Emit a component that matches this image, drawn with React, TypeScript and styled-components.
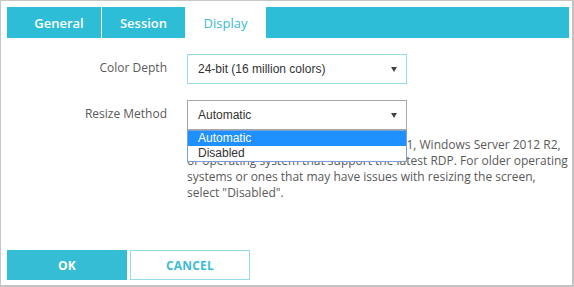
import React from "react";
import styled, { createGlobalStyle } from "styled-components";

const Global = createGlobalStyle`
  html, body { margin: 0; padding: 0; background: #fff; }
  * { box-sizing: border-box; }
`;

const CYAN = "#2dbdd7";

const Frame = styled.div`
  width: 574px;
  height: 287px;
  border-top: 1px solid #c6c6c6;
  border-left: 1px solid #c6c6c6;
  border-right: 2px solid #c2c2c2;
  border-bottom: 2px solid #c2c2c2;
  padding: 6px 3px 5px 6px;
  display: flex;
  flex-direction: column;
  font-family: "Open Sans", "Liberation Sans", sans-serif;
  background: #fff;
`;

const TabBar = styled.div`
  height: 31px;
  background: ${CYAN};
  display: flex;
  flex-shrink: 0;
`;

const Tab = styled.div<{ $w: number; $active?: boolean; $pl?: number; $sep?: boolean }>`
  width: ${(p) => p.$w}px;
  padding-left: ${(p) => p.$pl ?? 0}px;
  display: flex;
  align-items: center;
  justify-content: center;
  font-size: 13px;
  font-weight: ${(p) => (p.$active ? 400 : 600)};
  color: ${(p) => (p.$active ? "#3ab9d3" : "#fff")};
  background: ${(p) => (p.$active ? "#fff" : "transparent")};
  border-left: ${(p) => (p.$sep ? "1px solid #fff" : "none")};
`;

const Body = styled.div`
  flex: 1;
  padding-top: 16px;
`;

const Form = styled.div`
  display: grid;
  grid-template-columns: 160px 220px;
  column-gap: 20px;
  row-gap: 16px;
  align-items: center;
`;

const Label = styled.div`
  text-align: right;
  font-size: 12px;
  color: #5a5a5a;
  line-height: 16px;
  margin-top: -3px;
`;

const SelectBox = styled.div<{ $focused?: boolean }>`
  position: relative;
  height: 30px;
  border: 1px solid ${(p) => (p.$focused ? "#a8a8a8" : "#93dce9")};
  padding: 0 10px;
  display: flex;
  align-items: center;
  justify-content: space-between;
  font-family: "Liberation Sans", Arial, sans-serif;
  font-size: 12px;
  color: #333;
  background: #fff;
`;

const Arrow = styled.svg`
  width: 6px;
  height: 5px;
  margin-right: -1px;
  margin-top: 1px;
`;

const Dropdown = styled.ul`
  position: absolute;
  left: -1px;
  right: -1px;
  top: 29px;
  margin: 0;
  padding: 0;
  list-style: none;
  border: 1px solid #7d9ed6;
  background: #fff;
  z-index: 2;
`;

const Option = styled.li<{ $selected?: boolean }>`
  height: 15px;
  line-height: 15px;
  padding-left: 10px;
  font-family: "Liberation Sans", Arial, sans-serif;
  font-size: 12px;
  color: ${(p) => (p.$selected ? "#fff" : "#333")};
  background: ${(p) => (p.$selected ? "#1e90ff" : "#fff")};
`;

const Description = styled.p`
  grid-column: 2;
  width: 382px;
  margin: -9px 0 0;
  font-size: 12px;
  line-height: 16px;
  color: #5a5a5a;
`;

const Footer = styled.div`
  display: flex;
  gap: 3px;
`;

const Button = styled.button<{ $primary?: boolean }>`
  width: 120px;
  height: 30px;
  font-family: "Open Sans", "Liberation Sans", sans-serif;
  font-weight: 700;
  font-size: 12px;
  letter-spacing: 0.2px;
  color: ${(p) => (p.$primary ? "#fff" : "#3bbcd5")};
  background: ${(p) => (p.$primary ? "#35bdd6" : "#fff")};
  border: ${(p) => (p.$primary ? "none" : "1px solid #92dbe8")};
  padding: 0;
  cursor: pointer;
`;

const Caret = () => (
  <Arrow viewBox="0 0 6 5">
    <polygon points="0,0 6,0 3,5" fill="#444" />
  </Arrow>
);

export default function App() {
  return (
    <>
      <Global />
      <Frame>
        <TabBar>
          <Tab $w={94} $pl={10}>General</Tab>
          <Tab $w={84} $sep>Session</Tab>
          <Tab $w={81} $active>Display</Tab>
        </TabBar>
        <Body>
          <Form>
            <Label>Color Depth</Label>
            <SelectBox>
              <span>24-bit (16 million colors)</span>
              <Caret />
            </SelectBox>
            <Label>Resize Method</Label>
            <SelectBox $focused>
              <span>Automatic</span>
              <Caret />
              <Dropdown>
                <Option $selected>Automatic</Option>
                <Option>Disabled</Option>
              </Dropdown>
            </SelectBox>
            <Description>
              Select "Automatic" to Windows 8 and 8.1, Windows Server 2012 R2,
              or operating system that support the latest RDP. For older operating
              systems or ones that may have issues with resizing the screen,
              select "Disabled".
            </Description>
          </Form>
        </Body>
        <Footer>
          <Button $primary>OK</Button>
          <Button>CANCEL</Button>
        </Footer>
      </Frame>
    </>
  );
}
